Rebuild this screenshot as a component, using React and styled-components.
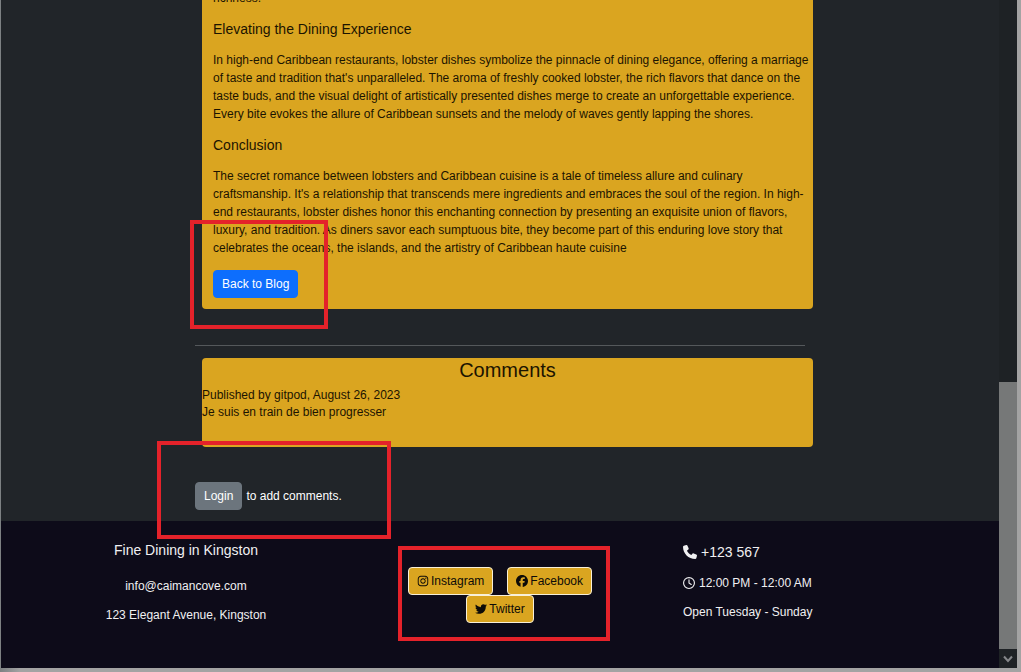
import React from "react";
import styled, { createGlobalStyle, css } from "styled-components";
import { FaInstagram, FaFacebook, FaTwitter, FaPhone, FaRegClock } from "react-icons/fa6";

const Global = createGlobalStyle`
  *, *::before, *::after { box-sizing: border-box; }
  body {
    margin: 0;
    background: #a9a9a9;
    font: 12px/18px "Liberation Sans", Arial, sans-serif;
    overflow: hidden;
  }
  h2, h3, h4, p { margin: 0; font-weight: 400; }
`;

const Frame = styled.div`
  position: relative;
  display: flex;
  height: 100vh;
  padding: 0 4px 4px 1px;
  background: linear-gradient(90deg, #7c8082 0, #a3a3a3 20px);
`;

const Page = styled.div`
  flex: 1;
  min-width: 0;
  display: flex;
  flex-direction: column;
  justify-content: flex-end;
  overflow: hidden;
  background: #212529;
`;

const Main = styled.main`
  width: calc(100% - 48px);
  max-width: 610px;
  margin: 0 auto;
`;

const Card = styled.section`
  margin: 0 -8px 0 7px;
  background: #daa520;
  color: #1c1400;
  border-radius: 4px;
`;

const Article = styled(Card)`
  padding: 12px 4px 11px 11px;
`;

const ArticleHeading = styled.h3`
  font-size: 14px;
  line-height: 18px;
  margin-bottom: 13px;
`;

const Paragraph = styled.p`
  margin-bottom: 13px;
`;

const Divider = styled.hr`
  margin: 36px 0 12px;
  border: 0;
  border-top: 1px solid #54585b;
`;

const Comments = styled(Card)`
  min-height: 89px;
  line-height: 17px;
`;

const CommentsTitle = styled.h2`
  font-size: 20px;
  line-height: 24px;
  padding-bottom: 5px;
  text-align: center;
`;

const tones = {
  primary: css`background: #0d6efd; border-color: #0d6efd; color: #fff;`,
  secondary: css`background: #6c757d; border-color: #6c757d; color: #fff;`,
  gold: css`background: #daa520; border-color: #f8f0d8; color: #0d0b08;`,
};

const ButtonLink = styled.a`
  display: inline-flex;
  align-items: center;
  gap: 2px;
  height: 28px;
  padding: 0 8px;
  border: 1px solid;
  border-radius: 4px;
  text-decoration: none;
  ${({ $tone }) => tones[$tone]}
`;

const LoginRow = styled.p`
  display: flex;
  align-items: center;
  gap: 4px;
  padding: 35px 0 11px;
  color: #fff;
`;

const Footer = styled.footer`
  display: grid;
  grid-template-columns: repeat(3, 1fr);
  min-height: 147px;
  padding: 20px 28px;
  background: #0d0b19;
  color: #f0f0f2;
`;

const FooterColumn = styled.div`
  display: flex;
  flex-direction: column;
  gap: 11px;
  text-align: ${({ $start }) => ($start ? "left" : "center")};
  padding: ${({ $start }) => ($start ? "2px 0 0 26px" : "0")};
`;

const FooterTitle = styled.h4`
  display: flex;
  align-items: center;
  justify-content: ${({ $start }) => ($start ? "flex-start" : "center")};
  gap: 4px;
  font-size: 14px;
  line-height: 18px;
  padding-bottom: ${({ $start }) => ($start ? "2px" : "7px")};
`;

const InfoLine = styled.p`
  display: flex;
  align-items: center;
  gap: 4px;
`;

const Socials = styled.nav`
  display: flex;
  flex-wrap: wrap;
  justify-content: center;
  align-content: flex-start;
  column-gap: 14px;
  padding: 26px 60px 0;
`;

const Scrollbar = styled.div`
  width: 18px;
  display: flex;
  flex-direction: column;
  justify-content: flex-end;
  background: #1e2225;
`;

const Thumb = styled.div`
  height: 40%;
  background: #767878;
`;

const ScrollDown = styled.div`
  height: 19px;
  display: flex;
  align-items: center;
  justify-content: center;
`;

const Mark = styled.div`
  position: absolute;
  left: ${({ $x }) => $x}px;
  top: ${({ $y }) => $y}px;
  width: ${({ $w }) => $w}px;
  height: ${({ $h }) => $h}px;
  border: 4px solid #e4222a;
  pointer-events: none;
`;

export default function App() {
  return (
    <>
      <Global />
      <Frame>
        <Page>
          <Main>
            <Article>
              <Paragraph>richness.</Paragraph>
              <ArticleHeading>Elevating the Dining Experience</ArticleHeading>
              <Paragraph>
                In high-end Caribbean restaurants, lobster dishes symbolize the pinnacle of dining
                elegance, offering a marriage of taste and tradition that's unparalleled. The aroma
                of freshly cooked lobster, the rich flavors that dance on the taste buds, and the
                visual delight of artistically presented dishes merge to create an unforgettable
                experience. Every bite evokes the allure of Caribbean sunsets and the melody of
                waves gently lapping the shores.
              </Paragraph>
              <ArticleHeading>Conclusion</ArticleHeading>
              <Paragraph>
                The secret romance between lobsters and Caribbean cuisine is a tale of timeless
                allure and culinary craftsmanship. It's a relationship that transcends mere
                ingredients and embraces the soul of the region. In high-end restaurants, lobster
                dishes honor this enchanting connection by presenting an exquisite union of flavors,
                luxury, and tradition. As diners savor each sumptuous bite, they become part of this
                enduring love story that celebrates the oceans, the islands, and the artistry of
                Caribbean haute cuisine
              </Paragraph>
              <ButtonLink href="#blog" $tone="primary">Back to Blog</ButtonLink>
            </Article>
            <Divider />
            <Comments>
              <CommentsTitle>Comments</CommentsTitle>
              <p>Published by gitpod, August 26, 2023</p>
              <p>Je suis en train de bien progresser</p>
            </Comments>
            <LoginRow>
              <ButtonLink href="#login" $tone="secondary">Login</ButtonLink>
              to add comments.
            </LoginRow>
          </Main>
          <Footer>
            <FooterColumn>
              <FooterTitle>Fine Dining in Kingston</FooterTitle>
              <p>info@caimancove.com</p>
              <p>123 Elegant Avenue, Kingston</p>
            </FooterColumn>
            <Socials>
              <ButtonLink href="#instagram" $tone="gold"><FaInstagram size={12} />Instagram</ButtonLink>
              <ButtonLink href="#facebook" $tone="gold"><FaFacebook size={12} />Facebook</ButtonLink>
              <ButtonLink href="#twitter" $tone="gold"><FaTwitter size={12} />Twitter</ButtonLink>
            </Socials>
            <FooterColumn $start>
              <FooterTitle $start><FaPhone size={14} />+123 567</FooterTitle>
              <InfoLine><FaRegClock size={12} />12:00 PM - 12:00 AM</InfoLine>
              <p>Open Tuesday - Sunday</p>
            </FooterColumn>
          </Footer>
        </Page>
        <Scrollbar>
          <Thumb />
          <ScrollDown>
            <svg width="10" height="8" viewBox="0 0 10 8" fill="none" stroke="#85878a" strokeWidth="2">
              <path d="M1 1.5 5 6 9 1.5" />
            </svg>
          </ScrollDown>
        </Scrollbar>
        <Mark $x={190} $y={220} $w={138} $h={109} />
        <Mark $x={157} $y={441} $w={234} $h={98} />
        <Mark $x={398} $y={546} $w={212} $h={95} />
      </Frame>
    </>
  );
}
